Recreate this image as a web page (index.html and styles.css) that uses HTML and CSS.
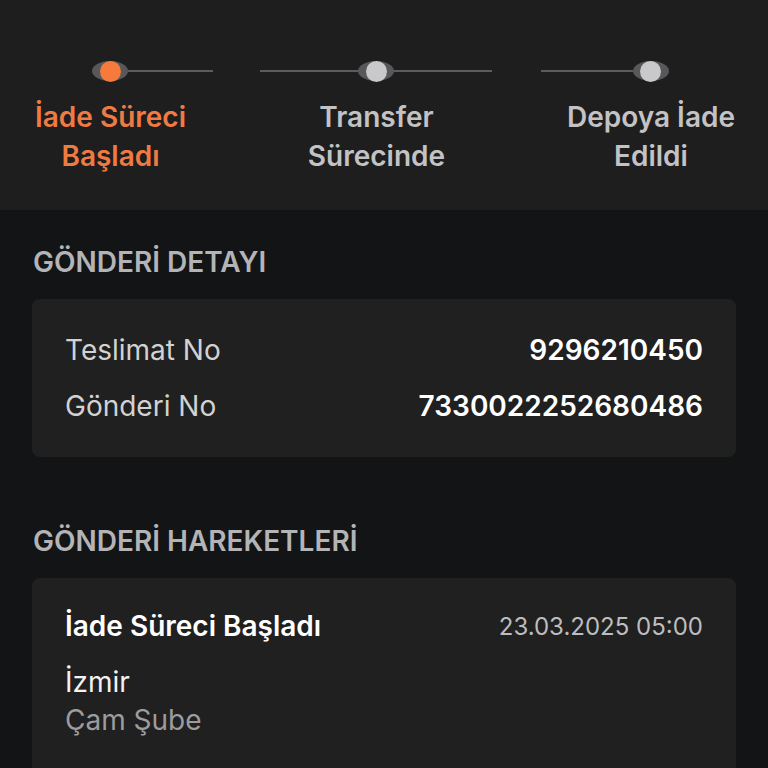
FILE: index.html
```html
<!DOCTYPE html>
<html lang="tr">
<head>
<meta charset="utf-8">
<link rel="stylesheet" href="styles.css">
</head>
<body>
<header class="top">
  <div class="steps">
    <div class="step active">
      <div class="track">
        <span class="line line-a hidden"></span>
        <span class="dot"><span class="core"></span></span>
        <span class="line line-a"></span>
      </div>
      <div class="step-label">İade Süreci<br>Başladı</div>
    </div>
    <div class="step">
      <div class="track">
        <span class="line line-b"></span>
        <span class="dot"><span class="core"></span></span>
        <span class="line line-b"></span>
      </div>
      <div class="step-label">Transfer<br>Sürecinde</div>
    </div>
    <div class="step">
      <div class="track">
        <span class="line line-c"></span>
        <span class="dot"><span class="core"></span></span>
        <span class="line line-c hidden"></span>
      </div>
      <div class="step-label">Depoya İade<br>Edildi</div>
    </div>
  </div>
</header>
<main class="content">
  <h2 class="section-title first">GÖNDERİ DETAYI</h2>
  <section class="card detail">
    <div class="row"><span class="label">Teslimat No</span><span class="value">9296210450</span></div>
    <div class="row"><span class="label">Gönderi No</span><span class="value">7330022252680486</span></div>
  </section>
  <h2 class="section-title second">GÖNDERİ HAREKETLERİ</h2>
  <section class="card moves">
    <div class="move-head"><span class="move-title">İade Süreci Başladı</span><span class="move-date">23.03.2025 05:00</span></div>
    <div class="move-city">İzmir</div>
    <div class="move-branch">Çam Şube</div>
  </section>
</main>
</body>
</html>
```
FILE: styles.css
```css
* { box-sizing: border-box; }
html, body { margin: 0; padding: 0; }
body {
  background: #131416;
  font-family: Inter, "Noto Sans", "Liberation Sans", sans-serif;
  color: #d6d6d6;
  width: 768px;
  height: 768px;
  overflow: hidden;
}
.top {
  background: #1e1e1f;
  height: 210px;
  padding-top: 61px;
}
.steps {
  display: flex;
  justify-content: space-between;
  padding: 0 33px 0 35px;
}
.step {
  display: flex;
  flex-direction: column;
  align-items: center;
}
.track {
  width: 0;
  height: 20px;
  display: flex;
  align-items: center;
  justify-content: center;
}
.line {
  flex: none;
  height: 2px;
  background: #5c5c5e;
}
.line.hidden { background: transparent; }
.line-a { width: 85px; }
.line-b { width: 98px; }
.line-c { width: 92px; }
.dot {
  flex: none;
  width: 36px;
  height: 20px;
  border-radius: 50%;
  background: #58585a;
  display: flex;
  align-items: center;
  justify-content: center;
}
.core {
  width: 21px;
  height: 21px;
  border-radius: 50%;
  background: #c9c9cc;
}
.step.active .core { background: #f57a3c; }
.step-label {
  margin-top: 17px;
  font-size: 28px;
  line-height: 39px;
  font-weight: 600;
  text-align: center;
  color: #c3c3c5;
  white-space: nowrap;
}
.step.active .step-label { color: #ef7b43; }

.content { padding: 0 32px; }
.section-title {
  margin: 0;
  font-size: 28px;
  line-height: 32px;
  font-weight: 600;
  color: #b4b4b6;
  padding-left: 1px;
}
.section-title.first { margin-top: 36px; }
.section-title.second { margin-top: 68px; }
.card {
  background: #202020;
  border-radius: 8px;
  margin-top: 21px;
  padding: 23px 33px;
}
.row {
  display: flex;
  justify-content: space-between;
  align-items: center;
  height: 56px;
  font-size: 28px;
}
.label { color: #d2d2d2; }
.value { color: #ffffff; font-weight: 600; }
.moves { padding-top: 30px; min-height: 220px; }
.move-head {
  display: flex;
  justify-content: space-between;
  align-items: center;
  height: 36px;
}
.move-title { font-size: 28px; font-weight: 600; color: #ffffff; }
.move-date { font-size: 24px; color: #bdbdbf; }
.move-city { margin-top: 20px; font-size: 28px; line-height: 36px; color: #f2f2f2; }
.move-branch { font-size: 28px; line-height: 40px; color: #9c9c9e; }
```
